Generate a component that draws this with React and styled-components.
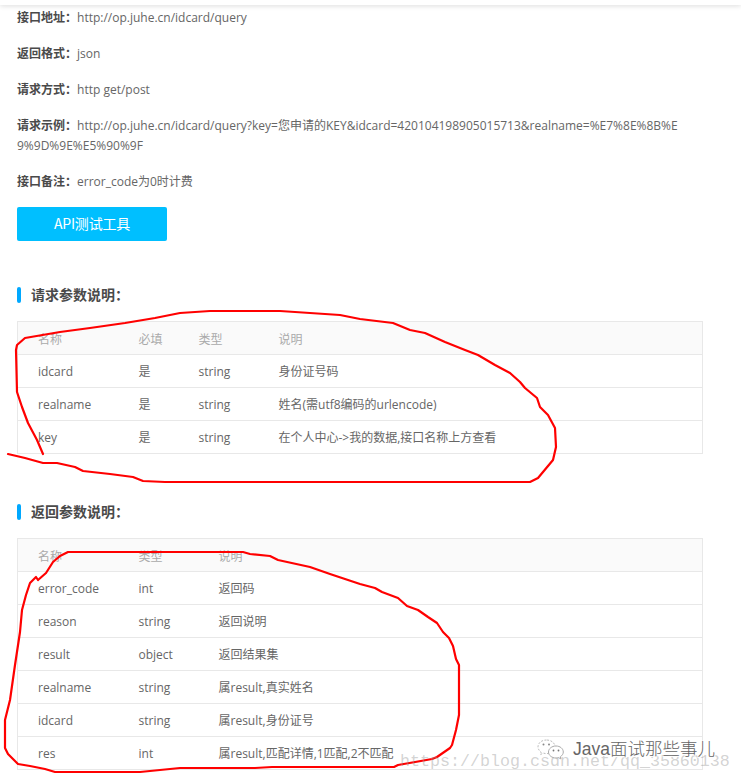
import styled, { createGlobalStyle } from 'styled-components';

const GlobalStyle = createGlobalStyle`
  html, body {
    margin: 0;
    padding: 0;
    background: #fff;
  }
`;

const Page = styled.div`
  position: relative;
  width: 741px;
  height: 781px;
  overflow: hidden;
  font-family: 'Open Sans', 'Noto Sans CJK SC', sans-serif;
  font-size: 12px;
  line-height: 20px;
  color: #666;
`;

const TopBar = styled.div`
  height: 5px;
  background: #fff;
  box-shadow: 0 1px 5px rgba(0, 0, 0, 0.14);
`;

const Content = styled.div`
  padding: 2px 38px 0 17px;
`;

const InfoLine = styled.p`
  margin: 0 0 15px;
  padding-top: 1px;
  max-width: 675px;
  word-break: break-all;
  b {
    font-family: 'Noto Sans CJK SC', sans-serif;
    line-height: 1;
    color: #4a4a4a;
    font-weight: 700;
  }
`;

const TestButton = styled.a`
  display: block;
  width: 150px;
  height: 34px;
  line-height: 32px;
  border-radius: 2px;
  background: #00bfff;
  color: #fff;
  font-size: 14px;
  text-align: center;
  font-family: 'Noto Sans CJK SC', sans-serif;
  letter-spacing: -0.2px;
`;

const SectionTitle = styled.h3`
  margin: ${({ $top }) => $top}px 0 16px;
  padding-left: 14px;
  height: 20px;
  position: relative;
  font-family: 'Noto Sans CJK SC', sans-serif;
  font-size: 14px;
  line-height: 18px;
  font-weight: 700;
  color: #4a4a4a;
  &::before {
    content: '';
    position: absolute;
    left: 0;
    top: 2px;
    width: 4px;
    height: 16px;
    border-radius: 2px;
    background: #00a8ff;
  }
`;

const ParamTable = styled.table`
  width: 686px;
  table-layout: fixed;
  border-collapse: collapse;
  border: 1px solid #e8e8e8;
  th, td {
    height: 31px;
    padding: 1px 0 0 20px;
    border-bottom: 1px solid #e8e8e8;
    text-align: left;
    font-weight: 400;
  }
  th {
    background: #fafafa;
    color: #aaa;
    font-family: 'Noto Sans CJK SC', sans-serif;
  }
  td + td, th + th {
    padding-left: 0;
  }
`;

const Col = styled.col`
  width: ${({ $w }) => ($w ? `${$w}px` : 'auto')};
`;

const Scribble = styled.svg`
  position: absolute;
  left: 0;
  top: 0;
  pointer-events: none;
  polyline {
    fill: none;
    stroke: #f00;
    stroke-width: 2.2;
    stroke-linejoin: round;
    stroke-linecap: round;
  }
`;

const Stamp = styled.div`
  position: absolute;
  left: 537px;
  top: 737px;
  display: flex;
  align-items: center;
  gap: 8px;
  color: #666;
  font-family: 'Liberation Sans', 'Noto Sans CJK SC', sans-serif;
  font-size: 17.5px;
  font-weight: 300;
  line-height: 24px;
  white-space: nowrap;
  text-shadow: 1px 1px 0 #fff, -1px -1px 0 #fff, 1px -1px 0 #fff, -1px 1px 0 #fff;
`;

const Watermark = styled.div`
  position: absolute;
  left: 400px;
  top: 752px;
  font-family: 'Liberation Mono', monospace;
  font-size: 16.67px;
  line-height: 20px;
  color: rgba(150, 150, 150, 0.42);
  white-space: nowrap;
`;

const requestRows = [
  ['idcard', '是', 'string', '身份证号码'],
  ['realname', '是', 'string', '姓名(需utf8编码的urlencode)'],
  ['key', '是', 'string', '在个人中心->我的数据,接口名称上方查看'],
];

const responseRows = [
  ['error_code', 'int', '返回码'],
  ['reason', 'string', '返回说明'],
  ['result', 'object', '返回结果集'],
  ['realname', 'string', '属result,真实姓名'],
  ['idcard', 'string', '属result,身份证号'],
  ['res', 'int', '属result,匹配详情,1匹配,2不匹配'],
];

const circleOne =
  '43,454 37,440 28,423 22,407 17,392 16,350 17,345 25,338 60,332 90,328 125,323 155,318 180,313 210,311 280,311 340,315 360,319 393,323 410,330 425,333 445,342 465,350 478,355 495,365 510,373 520,382 525,388 537,398 540,407 548,415 555,428 556,447 553,460 543,472 538,478 530,482 165,482 143,481 133,477 110,474 83,471 75,467 57,463 43,463 25,458 8,454';

const circleTwo =
  '38,580 46,573 53,562 60,556 68,552 243,552 250,554 270,556 278,560 310,567 330,574 360,584 375,588 382,592 398,598 407,606 418,610 428,617 437,623 443,632 449,638 453,646 456,659 459,665 459,715 456,730 452,745 450,748 437,757 432,759 398,765 394,767 272,767 255,768 180,768 140,772 55,772 45,769 30,766 18,764 8,754 5,748 5,720 10,700 15,665 20,632 22,610 26,595 30,583 36,577 38,580';

function WeChatMark() {
  return (
    <svg width="28" height="21" viewBox="0 0 28 21">
      <path
        d="M9.5 1C4.6 1 1 4 1 7.8c0 2.2 1.2 4 3.1 5.3L3.4 15.6l2.9-1.5c1 .3 2 .5 3.2.5 4.9 0 8.5-3 8.5-6.8S14.4 1 9.5 1z"
        fill="#fff"
        stroke="#bbb"
        strokeDasharray="2 1.5"
      />
      <path
        d="M19 7c-4.2 0-7.5 2.7-7.5 6s3.3 6 7.5 6c.9 0 1.7-.1 2.5-.4l2.4 1.3-.6-2.1c1.8-1.2 3-2.9 3-4.8 0-3.3-3.2-6-7.3-6z"
        fill="#fff"
        stroke="#aaa"
      />
      <circle cx="6.5" cy="5.5" r="1" fill="#888" />
      <circle cx="12" cy="5.5" r="1" fill="#888" />
      <circle cx="16.5" cy="11.5" r="0.9" fill="#777" />
      <circle cx="21.5" cy="11.5" r="0.9" fill="#777" />
    </svg>
  );
}

export default function App() {
  return (
    <Page>
      <GlobalStyle />
      <TopBar />
      <Content>
        <InfoLine>
          <b>接口地址：</b>http://op.juhe.cn/idcard/query
        </InfoLine>
        <InfoLine>
          <b>返回格式：</b>json
        </InfoLine>
        <InfoLine>
          <b>请求方式：</b>http get/post
        </InfoLine>
        <InfoLine>
          <b>请求示例：</b>
          http://op.juhe.cn/idcard/query?key=您申请的KEY&amp;idcard=420104198905015713&amp;realname=%E7%8E%8B%E9%9D%9E%E5%90%9F
        </InfoLine>
        <InfoLine>
          <b>接口备注：</b>error_code为0时计费
        </InfoLine>
        <TestButton>API测试工具</TestButton>

        <SectionTitle $top={44}>请求参数说明：</SectionTitle>
        <ParamTable>
          <colgroup>
            <Col $w={121} />
            <Col $w={60} />
            <Col $w={80} />
            <Col />
          </colgroup>
          <thead>
            <tr>
              <th>名称</th>
              <th>必填</th>
              <th>类型</th>
              <th>说明</th>
            </tr>
          </thead>
          <tbody>
            {requestRows.map((row) => (
              <tr key={row[0]}>
                {row.map((cell, index) => (
                  <td key={index}>{cell}</td>
                ))}
              </tr>
            ))}
          </tbody>
        </ParamTable>

        <SectionTitle $top={48}>返回参数说明：</SectionTitle>
        <ParamTable>
          <colgroup>
            <Col $w={121} />
            <Col $w={80} />
            <Col />
          </colgroup>
          <thead>
            <tr>
              <th>名称</th>
              <th>类型</th>
              <th>说明</th>
            </tr>
          </thead>
          <tbody>
            {responseRows.map((row) => (
              <tr key={row[0]}>
                {row.map((cell, index) => (
                  <td key={index}>{cell}</td>
                ))}
              </tr>
            ))}
          </tbody>
        </ParamTable>
      </Content>

      <Scribble width="741" height="781" viewBox="0 0 741 781">
        <polyline points={circleOne} />
        <polyline points={circleTwo} />
      </Scribble>
      <Watermark>https://blog.csdn.net/qq_35860138</Watermark>
      <Stamp>
        <WeChatMark />
        <span>Java面试那些事儿</span>
      </Stamp>
    </Page>
  );
}
